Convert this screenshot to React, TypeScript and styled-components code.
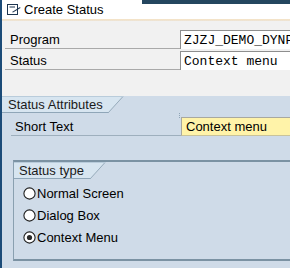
import React from "react";
import styled, { createGlobalStyle } from "styled-components";

const GlobalStyle = createGlobalStyle`
  html, body {
    margin: 0;
    padding: 0;
    background: #cfdbe8;
    overflow: hidden;
  }
  * {
    box-sizing: border-box;
  }
`;

const Window = styled.div`
  width: 290px;
  height: 268px;
  display: flex;
  flex-direction: column;
  border-left: 2px solid #1b4b78;
  font-family: "Liberation Sans", Arial, sans-serif;
  font-size: 13px;
  color: #000;
  overflow: hidden;
`;

const TitleBar = styled.div`
  display: flex;
  height: 19px;
  flex-shrink: 0;
`;

const TitleTab = styled.div`
  display: flex;
  align-items: center;
  gap: 3px;
  padding-left: 5px;
  width: 140px;
  background: #ffffff;
  font-size: 13px;
`;

const TitleFill = styled.div`
  flex: 1;
  background: #ffffff;
  border-top: 4px solid #24465f;
`;

const GoldLine = styled.div`
  height: 2px;
  flex-shrink: 0;
  background: linear-gradient(to bottom, #f6e3c4, #ece4d6);
`;

const Header = styled.div`
  background: #f1f1f1;
  padding-top: 9px;
  height: 75px;
  flex-shrink: 0;
`;

const FieldRow = styled.div`
  display: flex;
  align-items: stretch;
  height: 19px;
  margin-bottom: 2px;
`;

const Label = styled.div<{ $width: number }>`
  width: ${(p) => p.$width}px;
  padding-left: 5px;
  margin-left: 3px;
  display: flex;
  align-items: center;
  border-bottom: 1px solid #a9a9a9;
  padding-top: 1px;
`;

const MonoField = styled.div`
  flex: 1;
  background: #ffffff;
  border-top: 1px solid #8e8e8e;
  border-left: 1px solid #8e8e8e;
  padding-left: 3px;
  display: flex;
  align-items: center;
  font-family: "Liberation Mono", "Courier New", monospace;
  font-size: 13px;
  white-space: nowrap;
  overflow: hidden;
`;

const Panel = styled.div`
  flex: 1;
  background: #cfdbe8;
  display: flex;
  flex-direction: column;
`;

const TabRow = styled.div`
  display: flex;
  align-items: stretch;
  height: 17px;
`;

const TabLabel = styled.div<{ $width: number; $indent: number }>`
  width: ${(p) => p.$width}px;
  background: #d7e5f0;
  border-top: 1px solid #b9ccdb;
  border-bottom: 1px solid #8fa6b8;
  display: flex;
  align-items: center;
  padding-left: ${(p) => p.$indent}px;
  color: #1a1a1a;
  white-space: nowrap;
`;

const TabSlant = styled.svg`
  display: block;
  flex-shrink: 0;
`;

const TabRest = styled.div`
  flex: 1;
`;

const PanelBody = styled.div`
  padding: 4px 0 0 9px;
  display: flex;
  flex-direction: column;
`;

const ShortRow = styled.div`
  display: flex;
  height: 19px;
`;

const ShortLabel = styled.div`
  width: 170px;
  padding-left: 4px;
  display: flex;
  align-items: center;
  border-bottom: 1px solid #9eafbd;
`;

const YellowField = styled.div`
  position: relative;
  flex: 1;
  background: #fff3a9;
  border-top: 1px solid #a8a8a0;
  border-left: 1px solid #a8a8a0;
  border-bottom: 1px solid #c9c39a;
  padding-left: 4px;
  display: flex;
  align-items: center;
  white-space: nowrap;
`;

const Marker = styled.span`
  position: absolute;
  left: -3px;
  top: -5px;
  width: 2px;
  height: 5px;
  border-left: 1px dotted #8ea4b6;
`;

const GroupBox = styled.div`
  margin-top: 24px;
  margin-left: 2px;
  height: 101px;
  border-top: 2px solid #7b92a3;
  border-bottom: 2px solid #7b92a3;
  border-left: 1px solid #8aa0b0;
  display: flex;
  flex-direction: column;
`;

const RadioList = styled.div`
  display: flex;
  flex-direction: column;
  gap: 6px;
  padding: 6px 0 0 9px;
`;

const RadioRow = styled.div`
  display: flex;
  align-items: center;
  gap: 1px;
  height: 16px;
`;

const Radio = ({ checked }: { checked?: boolean }) => (
  <svg width="13" height="13" viewBox="0 0 13 13">
    <circle cx="6.5" cy="6.5" r="5.6" fill="#ffffff" stroke="#1f1f1f" strokeWidth="1.1" />
    {checked && <circle cx="6.5" cy="6.5" r="2.6" fill="#2a2a2a" />}
  </svg>
);

const Tab = ({ text, width, indent }: { text: string; width: number; indent: number }) => (
  <TabRow>
    <TabLabel $width={width} $indent={indent}>
      {text}
    </TabLabel>
    <TabSlant width="16" height="17" viewBox="0 0 16 17">
      <polygon points="0,0 15,0 0,17" fill="#d7e5f0" />
      <line x1="15" y1="0.5" x2="0" y2="17" stroke="#97abbb" strokeWidth="1" />
      <line x1="0" y1="0.5" x2="15" y2="0.5" stroke="#b9ccdb" strokeWidth="1" />
    </TabSlant>
    <TabRest />
  </TabRow>
);

const TitleIcon = () => (
  <svg width="14" height="12" viewBox="0 0 14 12">
    <rect x="0.5" y="0.5" width="10" height="10" fill="#ffffff" stroke="#1d3550" />
    <line x1="2.5" y1="3" x2="8" y2="3" stroke="#1d3550" />
    <path d="M5 8 L13 3 L13.5 4 L6 8.6 Z" fill="#1d3550" />
  </svg>
);

export default function App() {
  return (
    <>
      <GlobalStyle />
      <Window>
        <TitleBar>
          <TitleTab>
            <TitleIcon />
            Create Status
          </TitleTab>
          <TitleFill />
        </TitleBar>
        <GoldLine />
        <Header>
          <FieldRow>
            <Label $width={175}>Program</Label>
            <MonoField>ZJZJ_DEMO_DYNPRO</MonoField>
          </FieldRow>
          <FieldRow>
            <Label $width={175}>Status</Label>
            <MonoField>Context menu</MonoField>
          </FieldRow>
        </Header>
        <Panel>
          <Tab text="Status Attributes" width={106} indent={6} />
          <PanelBody>
            <ShortRow>
              <ShortLabel>Short Text</ShortLabel>
              <YellowField>
                <Marker />
                Context menu
              </YellowField>
            </ShortRow>
            <GroupBox>
              <Tab text="Status type" width={76} indent={5} />
              <RadioList>
                <RadioRow>
                  <Radio />
                  Normal Screen
                </RadioRow>
                <RadioRow>
                  <Radio />
                  Dialog Box
                </RadioRow>
                <RadioRow>
                  <Radio checked />
                  Context Menu
                </RadioRow>
              </RadioList>
            </GroupBox>
          </PanelBody>
        </Panel>
      </Window>
    </>
  );
}
